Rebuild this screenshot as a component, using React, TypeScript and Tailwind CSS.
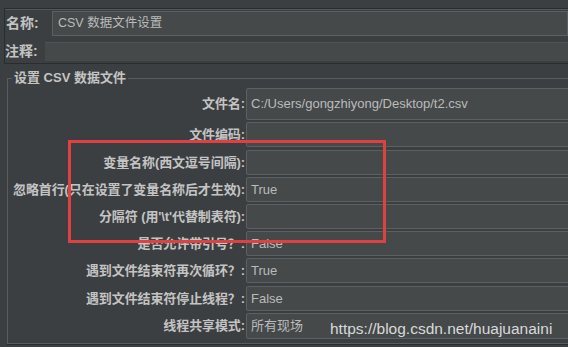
import React from 'react';

type Row = { label: string; value?: string; h: string; mt: string };

const rows: Row[] = [
  { label: '文件名:', value: 'C:/Users/gongzhiyong/Desktop/t2.csv', h: 'h-[32px]', mt: 'mt-0' },
  { label: '文件编码:', h: 'h-[25px]', mt: 'mt-[2px]' },
  { label: '变量名称(西文逗号间隔):', h: 'h-[25px]', mt: 'mt-[3px]' },
  { label: '忽略首行(只在设置了变量名称后才生效):', value: 'True', h: 'h-[25px]', mt: 'mt-[2px]' },
  { label: "分隔符 (用'\\t'代替制表符):", h: 'h-[25px]', mt: 'mt-[2px]' },
  { label: '是否允许带引号？:', value: 'False', h: 'h-[25px]', mt: 'mt-[2px]' },
  { label: '遇到文件结束符再次循环？:', value: 'True', h: 'h-[25px]', mt: 'mt-[2px]' },
  { label: '遇到文件结束符停止线程？:', value: 'False', h: 'h-[25px]', mt: 'mt-[3px]' },
  { label: '线程共享模式:', value: '所有现场', h: 'h-[26px]', mt: 'mt-[2px]' },
];

const font = "font-['Liberation_Sans','Noto_Sans_CJK_SC',sans-serif]";

export default function App() {
  return (
    <div className={`relative w-[568px] h-[347px] overflow-hidden bg-[#3c3f41] text-[#bbbbbb] ${font}`}>
      {/* name / comment panel */}
      <div className="mt-[8px] ml-[4px] border-t border-l border-b border-[#2a2c2e] shadow-[inset_1px_2px_0_-1px_#55585a]">
        <div className="flex items-center pt-[2px] pl-[1px]">
          <span className="w-[46px] text-[14px] font-bold text-[#c4c4c4]">名称:</span>
          <div className="flex-1 h-[25px] flex items-center pl-[5px] bg-[#45494a] border border-[#5d6062] text-[12.5px]">
            CSV 数据文件设置
          </div>
        </div>
        <div className="flex items-center mt-[5px] mb-[1px]">
          <span className="w-[40px] text-[14px] font-bold text-[#c4c4c4]">注释:</span>
          <div className="flex-1 h-[19px] bg-[#45494a] border-t border-[#4f5355]" />
        </div>
      </div>

      {/* CSV data set group */}
      <div className="relative mt-[14px] ml-[7px] w-[620px] h-[266px] border border-[#5a5d5f] shadow-[0_1px_0_#2a2c2e]">
        <span className="absolute left-[4px] -top-[10px] px-[2px] bg-[#3c3f41] text-[13px] font-bold text-[#c4c4c4] leading-[18px]">
          设置 CSV 数据文件
        </span>
        <div className="flex flex-col pt-[9px]">
          {rows.map((r) => (
            <div key={r.label} className={`flex items-center ${r.h} ${r.mt}`}>
              <span className="w-[237px] shrink-0 text-right text-[13px] font-bold text-[#c4c4c4] whitespace-nowrap tracking-[-0.1px]">
                {r.label}
              </span>
              <div className="ml-[1px] flex-1 h-full flex items-center pl-[4px] bg-[#45494a] border border-[#5d6062] rounded-[2px] text-[13px]">
                {r.value}
              </div>
            </div>
          ))}
        </div>
      </div>

      {/* red annotation box */}
      <div className="absolute left-[68px] top-[140px] w-[318px] h-[103px] border-[3px] border-[#e0403f]" />

      {/* watermark */}
      <span className="absolute left-[330px] top-[317px] text-[15.5px] text-[#d9d9d9] font-['Liberation_Sans',sans-serif]">
        https://blog.csdn.net/huajuanaini
      </span>
    </div>
  );
}
